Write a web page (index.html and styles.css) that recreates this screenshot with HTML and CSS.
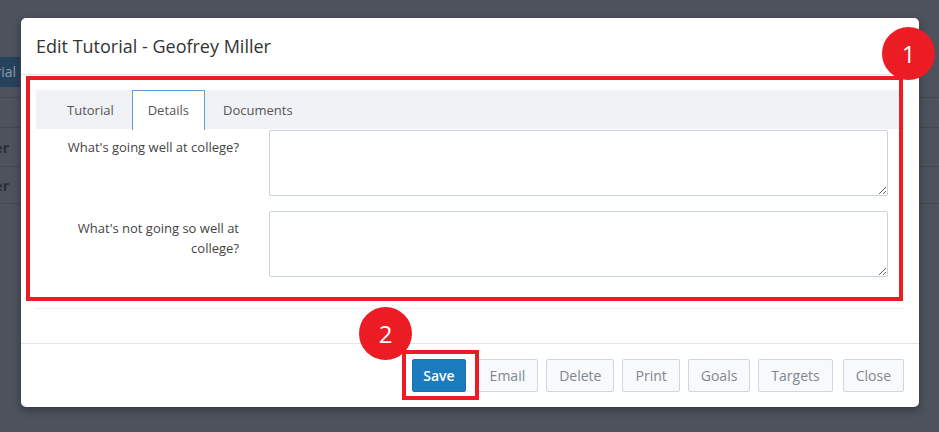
FILE: index.html
```html
<!DOCTYPE html>
<html lang="en">
<head>
<meta charset="utf-8">
<title>Edit Tutorial</title>
<link rel="stylesheet" href="styles.css">
</head>
<body>
<div class="page">
  <div class="toolbar">
    <div class="toolbar-left"><span class="add-btn">New Tutorial</span></div>
  </div>
  <div class="table">
    <div class="trow thead"></div>
    <div class="trow r1"><div class="cell"><span>Geofrey Miller</span></div></div>
    <div class="trow r2"><div class="cell"><span>Anna Baker</span></div></div>
    <div class="trow r3"></div>
  </div>
</div>

<div class="modal">
  <div class="modal-header">
    <h4 class="modal-title">Edit Tutorial - Geofrey Miller</h4>
  </div>
  <div class="modal-body">
    <ul class="nav-tabs">
      <li class="tab">Tutorial</li>
      <li class="tab active">Details</li>
      <li class="tab">Documents</li>
    </ul>
    <div class="tab-content">
      <div class="form-group">
        <label class="control-label">What's going well at college?</label>
        <textarea class="form-control"></textarea>
      </div>
      <div class="form-group">
        <label class="control-label">What's not going so well at college?</label>
        <textarea class="form-control"></textarea>
      </div>
    </div>
  </div>
  <div class="modal-footer">
    <button class="btn btn-primary">Save</button>
    <button class="btn">Email</button>
    <button class="btn">Delete</button>
    <button class="btn">Print</button>
    <button class="btn">Goals</button>
    <button class="btn">Targets</button>
    <button class="btn btn-last">Close</button>
  </div>
</div>

<div class="callout callout-1"></div>
<div class="badge badge-1">1</div>
<div class="callout callout-2"></div>
<div class="badge badge-2">2</div>
</body>
</html>
```

FILE: styles.css
```css
* { box-sizing: border-box; }

html, body {
  margin: 0;
  padding: 0;
}

body {
  background: #4e525c;
  font-family: "Open Sans", "Liberation Sans", sans-serif;
  width: 939px;
  height: 432px;
  overflow: hidden;
  position: relative;
}

/* dimmed page underneath */
.page {
  width: 939px;
}

.toolbar {
  height: 97px;
  padding-top: 57px;
}

.toolbar-left {
  width: 20px;
  display: flex;
  justify-content: flex-end;
}

.add-btn {
  flex: none;
  white-space: nowrap;
  background: #27425d;
  color: #8b9db0;
  font-size: 14px;
  line-height: 30px;
  height: 30px;
  padding: 0 4px 0 12px;
}

.trow {
  border-top: 1px solid #44484f;
  display: flex;
  align-items: center;
}

.thead { height: 30px; }
.r1 { height: 39px; }
.r2 { height: 37px; }
.r3 { height: 40px; }

.cell {
  width: 9px;
  display: flex;
  justify-content: flex-end;
}

.cell span {
  flex: none;
  white-space: nowrap;
  font-weight: 700;
  font-size: 14px;
  color: #292d34;
}

/* modal */
.modal {
  position: absolute;
  left: 21px;
  top: 18px;
  width: 898px;
  background: #fff;
  border-radius: 5px;
  box-shadow: 0 3px 9px rgba(0, 0, 0, 0.35);
}

.modal-header {
  padding: 15px;
  border-bottom: 1px solid #e5e5e5;
}

.modal-title {
  margin: 0;
  font-size: 18px;
  font-weight: 400;
  line-height: 26px;
  color: #333;
}

.modal-body {
  padding: 15px 15px 34px;
}

.nav-tabs {
  list-style: none;
  margin: 0;
  padding: 0 0 0 15px;
  display: flex;
  height: 39px;
  background: #f1f2f6;
}

.tab {
  padding: 10px 15px;
  margin-right: 2px;
  font-size: 13px;
  line-height: 18px;
  color: #555;
  border: 1px solid transparent;
  border-bottom: none;
  height: 40px;
}

.tab.active {
  background: #fff;
  border-color: #5e9dd3;
  color: #555;
}

.tab-content {
  padding: 1px 0 16px;
  border-bottom: 1px solid #eceef1;
}

.form-group {
  display: flex;
  margin-bottom: 15px;
}

.control-label {
  width: 203px;
  padding: 7px 0 0 15px;
  text-align: right;
  font-size: 13px;
  line-height: 20px;
  color: #444;
  flex: none;
}

.form-control {
  flex: 1;
  margin: 0 16px 0 30px;
  height: 66px;
  border: 1px solid #c9d3db;
  border-radius: 2px;
  background: #fff;
  font-family: inherit;
  font-size: 13px;
  padding: 6px 12px;
  display: block;
}

.modal-footer {
  border-top: 1px solid #e5e5e5;
  padding: 15px 15px 15px;
  display: flex;
  justify-content: flex-end;
  gap: 8px;
}

.btn {
  height: 33px;
  padding: 0 12px;
  font-family: inherit;
  font-size: 14px;
  line-height: 31px;
  color: #7f8791;
  background: #f8f9fa;
  border: 1px solid #cfd8df;
  border-radius: 2px;
  margin: 0;
}

.btn-last {
  margin-left: 2px;
}

.btn-primary {
  background: #1b7bbf;
  border-color: #1a72b2;
  color: #fff;
  font-weight: 600;
  padding: 0 10px;
  margin-right: 3px;
}

/* annotations on top */
.callout {
  position: absolute;
  border: 4px solid #ec1c24;
}

.callout-1 {
  left: 26px;
  top: 76px;
  width: 877px;
  height: 225px;
}

.callout-2 {
  left: 402px;
  top: 350px;
  width: 77px;
  height: 50px;
}

.badge {
  position: absolute;
  width: 53px;
  height: 53px;
  border-radius: 50%;
  background: #ec1c24;
  color: #fff;
  font-size: 24px;
  line-height: 53px;
  text-align: center;
}

.badge-1 {
  left: 882px;
  top: 27px;
}

.badge-2 {
  left: 359px;
  top: 307px;
}
```
